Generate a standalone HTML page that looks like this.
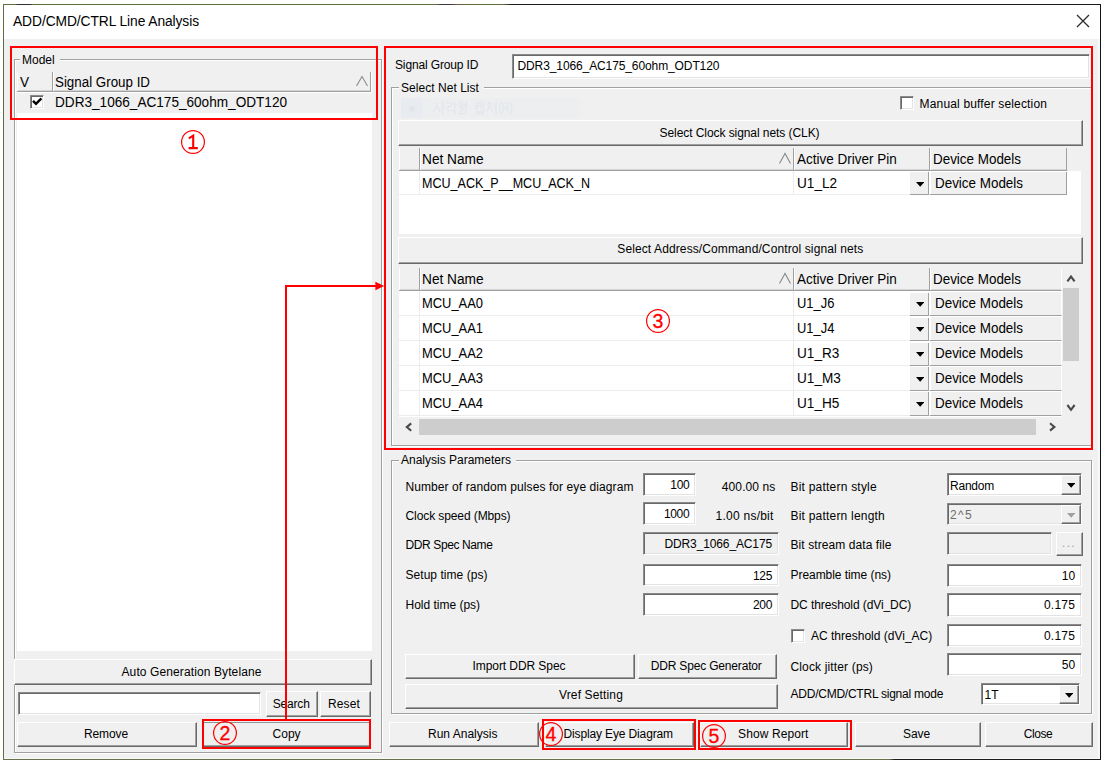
<!DOCTYPE html>
<html><head><meta charset="utf-8"><title>ADD/CMD/CTRL Line Analysis</title>
<style>
html,body{margin:0;padding:0;background:#fff;}
body{width:1104px;height:763px;position:relative;overflow:hidden;font-family:"Liberation Sans",sans-serif;font-size:12px;color:#000;}
.a{position:absolute;box-sizing:border-box;white-space:nowrap;}
.win{background:#f0f0f0;border:1px solid #55643a;border-right-color:#1c1c1c;border-bottom-color:#4a5535;}
.tb{background:#fff;}
.title{font-size:13.8px;color:#000;}
.btn{background:#f0f0f0;border:1px solid;border-color:#fff #696969 #696969 #fff;box-shadow:inset -1px -1px 0 #a0a0a0;text-align:center;}
.btn span{position:relative;display:inline-block;}
.sunk{background:#fff;border:1px solid;border-color:#8a8a8a #fff #fff #8a8a8a;box-shadow:inset 1px 1px 0 #696969, inset -1px -1px 0 #e3e3e3;}
.dis{background:#f0f0f0;}
.gb{border:1px solid #a0a0a0;box-shadow:1px 1px 0 #fff, inset 1px 1px 0 #fff;}
.gbl{background:#f0f0f0;padding:0 5px 0 2px;}
.lt{font-size:15.2px;transform:scaleX(0.895);transform-origin:0 50%;}
.red{border:2px solid #ff0000;}
.hdr{background:#f0f0f0;border-right:1px solid #a0a0a0;border-bottom:1px solid #a0a0a0;box-shadow:inset 1px 0 0 #fff, inset 0 -1px 0 #d4d4d4;}
.cb{background:#fff;border:1px solid;border-color:#8a8a8a #fff #fff #8a8a8a;box-shadow:inset 1px 1px 0 #696969, inset -1px -1px 0 #e3e3e3;}
</style></head><body>

<div class="a " style="left:3px;top:4px;width:1098px;height:756px;background:#f8f8f8;"></div>
<div class="a " style="left:4px;top:39px;width:1094px;height:718.5px;background:#f0f0f0;"></div>
<div class="a tb" style="left:4px;top:5px;width:1096px;height:34px;"></div>
<div class="a " style="left:3px;top:4px;width:1098px;height:1px;background:linear-gradient(to right,#5f6e40 0,#5f6e40 12px,#2f2f35 15px,#2f2f35 27px,#5f6e40 30px,#5f6e40 434px,#3a3a40 437px,#3a3a40 448px,#6b5a40 452px,#5f6e40 470px,#5f6e40 500px,#1c1c1c 508px,#1c1c1c 100%);"></div>
<div class="a " style="left:3px;top:4px;width:1px;height:756px;background:#5f6e40;"></div>
<div class="a " style="left:1100px;top:4px;width:1.2000000000000455px;height:756px;background:#141414;"></div>
<div class="a " style="left:3px;top:758.8px;width:1098.2px;height:1.2000000000000455px;background:linear-gradient(to right,#66734a 0,#66734a 886px,#1c1c1c 892px,#1c1c1c 100%);"></div>
<div class="a title" style="left:13px;top:13.0px;height:18px;line-height:18px;letter-spacing:-0.081px;">ADD/CMD/CTRL Line Analysis</div>
<svg class="a" style="left:1074px;top:12px" width="18" height="18" viewBox="0 0 18 18"><path d="M3 3 L15 15 M15 3 L3 15" stroke="#2b2b2b" stroke-width="1.3" fill="none"/></svg>
<div class="a gb" style="left:13.5px;top:59px;width:368.5px;height:694px;"></div>
<div class="a gbl" style="left:20px;top:53.0px;height:14px;line-height:14px;">Model</div>
<div class="a " style="left:17px;top:72px;width:355px;height:579px;background:#fff;"></div>
<div class="a hdr" style="left:17px;top:72px;width:36px;height:20px;"></div>
<div class="a hdr" style="left:53px;top:72px;width:318px;height:20px;"></div>
<div class="a lt" style="left:20px;top:72.5px;height:18px;line-height:18px;">V</div>
<div class="a lt" style="left:55.2px;top:72.5px;height:18px;line-height:18px;transform:scaleX(0.8791);">Signal Group ID</div>
<svg class="a" style="left:355px;top:75px" width="14" height="13" viewBox="0 0 14 13"><path d="M1.5 11 L7 1.5 L12.5 11" stroke="#8a8a8a" stroke-width="1.1" fill="none"/></svg>
<div class="a " style="left:17px;top:93px;width:355px;height:20px;background:#f0f0f0;"></div>
<div class="a cb" style="left:30px;top:95px;width:14px;height:14px;"></div>
<svg class="a" style="left:32px;top:97px" width="11" height="10" viewBox="0 0 11 10"><path d="M1 3.8 L4 6.8 L9.4 1.4" stroke="#000" stroke-width="2.4" fill="none"/></svg>
<div class="a lt" style="left:55.2px;top:93.0px;height:18px;line-height:18px;transform:scaleX(0.8951);">DDR3_1066_AC175_60ohm_ODT120</div>
<div class="a btn" style="left:14px;top:659px;width:358px;height:26px;line-height:24px;"><span style="left:-1.5px;top:0.2999999999999545px;letter-spacing:0.107px;">Auto Generation Bytelane</span></div>
<div class="a sunk" style="left:18px;top:692px;width:243px;height:23px;"></div>
<div class="a btn" style="left:266px;top:690.5px;width:52px;height:26.5px;line-height:24.5px;"><span style="left:-0.8000000000000114px;top:0.6499999999999773px;letter-spacing:-0.172px;">Search</span></div>
<div class="a btn" style="left:320px;top:690.5px;width:51px;height:26.5px;line-height:24.5px;"><span style="left:-1.5px;top:0.6499999999999773px;letter-spacing:0.128px;">Reset</span></div>
<div class="a btn" style="left:17px;top:722px;width:180px;height:25px;line-height:23px;"><span style="left:-1.0px;top:0px;letter-spacing:-0.115px;">Remove</span></div>
<div class="a btn" style="left:203px;top:722px;width:168px;height:25px;line-height:23px;border-top-color:#8d9692;"><span style="left:-0.39999999999997726px;top:0px;letter-spacing:-0.004px;">Copy</span></div>
<div class="a t" style="left:395px;top:56.5px;height:16px;line-height:16px;letter-spacing:-0.139px;">Signal Group ID</div>
<div class="a sunk" style="left:512px;top:54px;width:578px;height:25px;"></div>
<div class="a t" style="left:517.5px;top:58.0px;height:16px;line-height:16px;letter-spacing:-0.107px;">DDR3_1066_AC175_60ohm_ODT120</div>
<div class="a gb" style="left:391px;top:87px;width:701px;height:359px;"></div>
<div class="a gbl" style="left:399px;top:80.5px;height:14px;line-height:14px;letter-spacing:0.042px;">Select Net List</div>
<div class="a " style="left:401px;top:98px;width:179px;height:20px;background:#eceef0;"></div>
<div class="a " style="left:401px;top:98px;width:22px;height:20px;background:#e8ecf0;"></div>
<div class="a " style="left:409px;top:106px;width:6px;height:6px;background:#e2e6ea;border-radius:50%;"></div>
<svg class="a" style="left:433px;top:101px" width="82" height="16" viewBox="0 0 82 16" fill="none" stroke="#e3e6e9" stroke-width="1.2" stroke-linecap="round">
<path d="M4 1.5 L3.6 5 L0.6 10.5 M3.8 4.5 L7 10.5 M9.6 0.5 V13 M9.6 6 H11.6"/>
<path d="M13 2 H19 L18.6 4 L14 7.5 M21.6 0.5 V8 M21.6 4 H23.6 M15 9.6 H22 V13"/>
<path d="M27 0.8 H30 M25.4 2.8 H31.6 M33.6 0.5 V8 M31.6 3.6 H33.6 M31.6 5.8 H33.6"/><circle cx="28.5" cy="5.6" r="1.6"/><ellipse cx="30" cy="11" rx="3.2" ry="1.9"/>
<path d="M41.4 2 H46 L45.4 4.4 L42.4 7.5 M42.4 4.6 H45.6 M48 0.5 V8 M50.6 0.5 V8 M48 4 H50.6 M44 9 V12.8 H50.2 V9 M44 10.8 H50.2"/>
<path d="M56.5 0.6 V2 M53.6 2.8 H59.6 M56.6 3 L56 6 L53.4 10.5 M56.4 5.5 L59.6 10.5 M63 0.5 V13 M60.6 6 H63"/>
<path d="M68 1 Q65.4 7 68 13.4 M70 11.5 V2 H73 Q75.4 2 75.4 4.4 Q75.4 6.8 73 6.8 H70 M73 6.8 L75.8 11.5 M77.6 1 Q80.2 7 77.6 13.4"/>
</svg>
<div class="a cb" style="left:900px;top:96px;width:14px;height:14px;"></div>
<div class="a t" style="left:919.6px;top:96.0px;height:16px;line-height:16px;letter-spacing:0.158px;">Manual buffer selection</div>
<div class="a btn" style="left:398px;top:120px;width:685px;height:26px;line-height:24px;"><span style="left:-1.0px;top:-0.5px;letter-spacing:-0.069px;">Select Clock signal nets (CLK)</span></div>
<div class="a " style="left:399px;top:147.5px;width:682px;height:86.5px;background:#fff;"></div>
<div class="a " style="left:1067px;top:147.5px;width:14px;height:23.19999999999999px;background:#f0f0f0;"></div>
<div class="a hdr" style="left:399px;top:148px;width:20.5px;height:22.69999999999999px;"></div>
<div class="a hdr" style="left:419.5px;top:148px;width:374.5px;height:22.69999999999999px;"></div>
<div class="a hdr" style="left:794px;top:148px;width:136px;height:22.69999999999999px;"></div>
<div class="a hdr" style="left:930px;top:148px;width:137px;height:22.69999999999999px;"></div>
<div class="a lt" style="left:422px;top:149.7px;height:18px;line-height:18px;transform:scaleX(0.9009);">Net Name</div>
<div class="a lt" style="left:797px;top:149.7px;height:18px;line-height:18px;transform:scaleX(0.8882);">Active Driver Pin</div>
<div class="a lt" style="left:933px;top:149.7px;height:18px;line-height:18px;transform:scaleX(0.8835);">Device Models</div>
<svg class="a" style="left:778px;top:152px" width="14" height="13" viewBox="0 0 14 13"><path d="M1.5 11.5 L7 1.5 L12.5 11.5" stroke="#8a8a8a" stroke-width="1.1" fill="none"/></svg>
<div class="a " style="left:399px;top:194.4px;width:531px;height:1.0px;background:#ececec;"></div>
<div class="a " style="left:418.5px;top:170.7px;width:1.0px;height:24.700000000000017px;background:#ececec;"></div>
<div class="a " style="left:793px;top:170.7px;width:1px;height:24.700000000000017px;background:#ececec;"></div>
<div class="a lt" style="left:422px;top:173.89999999999998px;height:18px;line-height:18px;transform:scaleX(0.8259);">MCU_ACK_P__MCU_ACK_N</div>
<div class="a lt" style="left:797px;top:173.89999999999998px;height:18px;line-height:18px;">U1_L2</div>
<div class="a " style="left:910px;top:172.2px;width:19px;height:23.200000000000017px;background:#f0f0f0;border-right:1px solid #a0a0a0;border-bottom:1px solid #a0a0a0;"></div>
<svg class="a" style="left:916px;top:181.7px" width="8.4" height="5" viewBox="0 0 8.4 5"><path d="M0 0 L8.4 0 L4.2 4.7 Z" fill="#000"/></svg>
<div class="a " style="left:930px;top:171.7px;width:137px;height:23.700000000000017px;background:#f0f0f0;border-right:1px solid #a0a0a0;border-bottom:1px solid #a0a0a0;box-shadow:inset 1px 0 0 #fff;"></div>
<div class="a lt" style="left:935px;top:173.89999999999998px;height:18px;line-height:18px;transform:scaleX(0.8835);">Device Models</div>
<div class="a btn" style="left:398px;top:237px;width:685px;height:27px;line-height:25px;"><span style="left:-0.20000000000004547px;top:-0.6999999999999886px;letter-spacing:0.108px;">Select Address/Command/Control signal nets</span></div>
<div class="a " style="left:399px;top:268px;width:682px;height:168px;background:#fff;"></div>
<div class="a hdr" style="left:399px;top:268px;width:20.5px;height:23.100000000000023px;"></div>
<div class="a hdr" style="left:419.5px;top:268px;width:374.5px;height:23.100000000000023px;"></div>
<div class="a hdr" style="left:794px;top:268px;width:136px;height:23.100000000000023px;"></div>
<div class="a hdr" style="left:930px;top:268px;width:132px;height:23.100000000000023px;border-right-color:#fff;"></div>
<div class="a lt" style="left:422px;top:269.7px;height:18px;line-height:18px;transform:scaleX(0.9009);">Net Name</div>
<div class="a lt" style="left:797px;top:269.7px;height:18px;line-height:18px;transform:scaleX(0.8882);">Active Driver Pin</div>
<div class="a lt" style="left:933px;top:269.7px;height:18px;line-height:18px;transform:scaleX(0.8835);">Device Models</div>
<svg class="a" style="left:778px;top:272px" width="14" height="13" viewBox="0 0 14 13"><path d="M1.5 11.5 L7 1.5 L12.5 11.5" stroke="#8a8a8a" stroke-width="1.1" fill="none"/></svg>
<div class="a " style="left:399px;top:315.05px;width:531px;height:1.0px;background:#ececec;"></div>
<div class="a " style="left:418.5px;top:291.1px;width:1.0px;height:24.94999999999999px;background:#ececec;"></div>
<div class="a " style="left:793px;top:291.1px;width:1px;height:24.94999999999999px;background:#ececec;"></div>
<div class="a lt" style="left:422px;top:294.3px;height:18px;line-height:18px;transform:scaleX(0.8502);">MCU_AA0</div>
<div class="a lt" style="left:797px;top:294.3px;height:18px;line-height:18px;transform:scaleX(0.8518);">U1_J6</div>
<div class="a " style="left:910px;top:292.6px;width:19px;height:23.44999999999999px;background:#f0f0f0;border-right:1px solid #a0a0a0;border-bottom:1px solid #a0a0a0;"></div>
<svg class="a" style="left:916px;top:302.1px" width="8.4" height="5" viewBox="0 0 8.4 5"><path d="M0 0 L8.4 0 L4.2 4.7 Z" fill="#000"/></svg>
<div class="a " style="left:930px;top:292.1px;width:132px;height:23.94999999999999px;background:#f0f0f0;border-right:1px solid #fff;border-bottom:1px solid #a0a0a0;box-shadow:inset 1px 0 0 #fff;"></div>
<div class="a lt" style="left:935px;top:294.3px;height:18px;line-height:18px;transform:scaleX(0.8835);">Device Models</div>
<div class="a " style="left:399px;top:340.0px;width:531px;height:1.0px;background:#ececec;"></div>
<div class="a " style="left:418.5px;top:316.05px;width:1.0px;height:24.94999999999999px;background:#ececec;"></div>
<div class="a " style="left:793px;top:316.05px;width:1px;height:24.94999999999999px;background:#ececec;"></div>
<div class="a lt" style="left:422px;top:319.25px;height:18px;line-height:18px;transform:scaleX(0.8502);">MCU_AA1</div>
<div class="a lt" style="left:797px;top:319.25px;height:18px;line-height:18px;transform:scaleX(0.8518);">U1_J4</div>
<div class="a " style="left:910px;top:317.55px;width:19px;height:23.44999999999999px;background:#f0f0f0;border-right:1px solid #a0a0a0;border-bottom:1px solid #a0a0a0;"></div>
<svg class="a" style="left:916px;top:327.05px" width="8.4" height="5" viewBox="0 0 8.4 5"><path d="M0 0 L8.4 0 L4.2 4.7 Z" fill="#000"/></svg>
<div class="a " style="left:930px;top:317.05px;width:132px;height:23.94999999999999px;background:#f0f0f0;border-right:1px solid #fff;border-bottom:1px solid #a0a0a0;box-shadow:inset 1px 0 0 #fff;"></div>
<div class="a lt" style="left:935px;top:319.25px;height:18px;line-height:18px;transform:scaleX(0.8835);">Device Models</div>
<div class="a " style="left:399px;top:364.95px;width:531px;height:1.0px;background:#ececec;"></div>
<div class="a " style="left:418.5px;top:341.0px;width:1.0px;height:24.94999999999999px;background:#ececec;"></div>
<div class="a " style="left:793px;top:341.0px;width:1px;height:24.94999999999999px;background:#ececec;"></div>
<div class="a lt" style="left:422px;top:344.2px;height:18px;line-height:18px;transform:scaleX(0.8502);">MCU_AA2</div>
<div class="a lt" style="left:797px;top:344.2px;height:18px;line-height:18px;">U1_R3</div>
<div class="a " style="left:910px;top:342.5px;width:19px;height:23.44999999999999px;background:#f0f0f0;border-right:1px solid #a0a0a0;border-bottom:1px solid #a0a0a0;"></div>
<svg class="a" style="left:916px;top:352.0px" width="8.4" height="5" viewBox="0 0 8.4 5"><path d="M0 0 L8.4 0 L4.2 4.7 Z" fill="#000"/></svg>
<div class="a " style="left:930px;top:342.0px;width:132px;height:23.94999999999999px;background:#f0f0f0;border-right:1px solid #fff;border-bottom:1px solid #a0a0a0;box-shadow:inset 1px 0 0 #fff;"></div>
<div class="a lt" style="left:935px;top:344.2px;height:18px;line-height:18px;transform:scaleX(0.8835);">Device Models</div>
<div class="a " style="left:399px;top:389.9px;width:531px;height:1.0px;background:#ececec;"></div>
<div class="a " style="left:418.5px;top:365.95px;width:1.0px;height:24.94999999999999px;background:#ececec;"></div>
<div class="a " style="left:793px;top:365.95px;width:1px;height:24.94999999999999px;background:#ececec;"></div>
<div class="a lt" style="left:422px;top:369.15px;height:18px;line-height:18px;transform:scaleX(0.8502);">MCU_AA3</div>
<div class="a lt" style="left:797px;top:369.15px;height:18px;line-height:18px;">U1_M3</div>
<div class="a " style="left:910px;top:367.45px;width:19px;height:23.44999999999999px;background:#f0f0f0;border-right:1px solid #a0a0a0;border-bottom:1px solid #a0a0a0;"></div>
<svg class="a" style="left:916px;top:376.95px" width="8.4" height="5" viewBox="0 0 8.4 5"><path d="M0 0 L8.4 0 L4.2 4.7 Z" fill="#000"/></svg>
<div class="a " style="left:930px;top:366.95px;width:132px;height:23.94999999999999px;background:#f0f0f0;border-right:1px solid #fff;border-bottom:1px solid #a0a0a0;box-shadow:inset 1px 0 0 #fff;"></div>
<div class="a lt" style="left:935px;top:369.15px;height:18px;line-height:18px;transform:scaleX(0.8835);">Device Models</div>
<div class="a " style="left:399px;top:414.85px;width:531px;height:1.0px;background:#ececec;"></div>
<div class="a " style="left:418.5px;top:390.9px;width:1.0px;height:24.950000000000045px;background:#ececec;"></div>
<div class="a " style="left:793px;top:390.9px;width:1px;height:24.950000000000045px;background:#ececec;"></div>
<div class="a lt" style="left:422px;top:394.09999999999997px;height:18px;line-height:18px;transform:scaleX(0.8502);">MCU_AA4</div>
<div class="a lt" style="left:797px;top:394.09999999999997px;height:18px;line-height:18px;">U1_H5</div>
<div class="a " style="left:910px;top:392.4px;width:19px;height:23.450000000000045px;background:#f0f0f0;border-right:1px solid #a0a0a0;border-bottom:1px solid #a0a0a0;"></div>
<svg class="a" style="left:916px;top:401.9px" width="8.4" height="5" viewBox="0 0 8.4 5"><path d="M0 0 L8.4 0 L4.2 4.7 Z" fill="#000"/></svg>
<div class="a " style="left:930px;top:391.9px;width:132px;height:23.950000000000045px;background:#f0f0f0;border-right:1px solid #fff;border-bottom:1px solid #a0a0a0;box-shadow:inset 1px 0 0 #fff;"></div>
<div class="a lt" style="left:935px;top:394.09999999999997px;height:18px;line-height:18px;transform:scaleX(0.8835);">Device Models</div>
<div class="a " style="left:1062px;top:268px;width:19px;height:149px;background:#f0f0f0;"></div>
<div class="a " style="left:1063px;top:288px;width:16px;height:73px;background:#cdcdcd;"></div>
<div class="a " style="left:398px;top:417px;width:683px;height:19px;background:#f0f0f0;"></div>
<div class="a " style="left:419px;top:419px;width:617px;height:16px;background:#cdcdcd;"></div>
<svg class="a" style="left:0;top:0" width="1104" height="763" viewBox="0 0 1104 763" fill="none" stroke="#4a4a4a" stroke-width="2.1"><path d="M1067.4 281.4 L1071 276.6 L1074.6 281.4"/><path d="M1067.4 405 L1071 409.8 L1074.6 405"/><path d="M1050 423.2 L1054.4 426.9 L1050 430.6"/><path d="M411.2 423.4 L406.8 427.1 L411.2 430.8"/></svg>
<div class="a gb" style="left:391px;top:459.5px;width:701px;height:254.5px;"></div>
<div class="a gbl" style="left:399px;top:453.0px;height:14px;line-height:14px;letter-spacing:-0.002px;">Analysis Parameters</div>
<div class="a t" style="left:405.5px;top:479.0px;height:16px;line-height:16px;letter-spacing:0.083px;">Number of random pulses for eye diagram</div>
<div class="a t" style="left:405.5px;top:508.29999999999995px;height:16px;line-height:16px;letter-spacing:-0.095px;">Clock speed (Mbps)</div>
<div class="a t" style="left:405.5px;top:537.3px;height:16px;line-height:16px;letter-spacing:-0.387px;">DDR Spec Name</div>
<div class="a t" style="left:405.5px;top:567.2px;height:16px;line-height:16px;letter-spacing:0.042px;">Setup time (ps)</div>
<div class="a t" style="left:405.5px;top:596.5px;height:16px;line-height:16px;letter-spacing:-0.006px;">Hold time (ps)</div>
<div class="a sunk" style="left:643.3px;top:473px;width:52.700000000000045px;height:22.600000000000023px;"></div>
<div class="a t" style="right:414.70000000000005px;top:476.6px;height:16px;line-height:16px;text-align:right;letter-spacing:-0.344px;">100</div>
<div class="a sunk" style="left:643.3px;top:502.3px;width:52.700000000000045px;height:22.900000000000034px;"></div>
<div class="a t" style="right:414.70000000000005px;top:505.79999999999995px;height:16px;line-height:16px;text-align:right;letter-spacing:-0.326px;">1000</div>
<div class="a t" style="right:328.6px;top:479.0px;height:16px;line-height:16px;text-align:right;letter-spacing:0.098px;">400.00 ns</div>
<div class="a t" style="right:330.4px;top:508.29999999999995px;height:16px;line-height:16px;text-align:right;letter-spacing:0.239px;">1.00 ns/bit</div>
<div class="a sunk dis" style="left:643.3px;top:532px;width:135.70000000000005px;height:23px;"></div>
<div class="a t" style="right:332px;top:536.0px;height:16px;line-height:16px;text-align:right;letter-spacing:-0.127px;">DDR3_1066_AC175</div>
<div class="a sunk" style="left:643.3px;top:564px;width:135.70000000000005px;height:22.399999999999977px;"></div>
<div class="a t" style="right:332px;top:567.5px;height:16px;line-height:16px;text-align:right;letter-spacing:-0.344px;">125</div>
<div class="a sunk" style="left:643.3px;top:593.3px;width:135.70000000000005px;height:22.700000000000045px;"></div>
<div class="a t" style="right:332px;top:596.5px;height:16px;line-height:16px;text-align:right;letter-spacing:-0.344px;">200</div>
<div class="a t" style="left:790.5px;top:479.0px;height:16px;line-height:16px;letter-spacing:0.217px;">Bit pattern style</div>
<div class="a t" style="left:790.5px;top:508.29999999999995px;height:16px;line-height:16px;letter-spacing:0.209px;">Bit pattern length</div>
<div class="a t" style="left:790.5px;top:537.3px;height:16px;line-height:16px;letter-spacing:0.081px;">Bit stream data file</div>
<div class="a t" style="left:790.5px;top:567.2px;height:16px;line-height:16px;letter-spacing:-0.054px;">Preamble time (ns)</div>
<div class="a t" style="left:790.5px;top:596.5px;height:16px;line-height:16px;letter-spacing:-0.086px;">DC threshold (dVi_DC)</div>
<div class="a cb" style="left:791px;top:629px;width:14px;height:14px;"></div>
<div class="a t" style="left:811px;top:628.2px;height:16px;line-height:16px;letter-spacing:0.006px;">AC threshold (dVi_AC)</div>
<div class="a t" style="left:790.5px;top:658.5px;height:16px;line-height:16px;letter-spacing:0.146px;">Clock jitter (ps)</div>
<div class="a t" style="left:790.5px;top:686.2px;height:16px;line-height:16px;letter-spacing:-0.236px;">ADD/CMD/CTRL signal mode</div>
<div class="a sunk" style="left:946.5px;top:473px;width:135.5px;height:23px;"></div>
<div class="a t" style="left:950.0px;top:477.9px;height:16px;line-height:16px;letter-spacing:-0.227px;">Random</div>
<div class="a btn" style="left:1061px;top:475px;width:20px;height:20px;"></div>
<svg class="a" style="left:1067px;top:483.3px" width="8.4" height="5" viewBox="0 0 8.4 5"><path d="M0 0 L8.4 0 L4.2 4.7 Z" fill="#000"/></svg>
<div class="a sunk dis" style="left:946.5px;top:502.7px;width:135.5px;height:22.500000000000057px;"></div>
<div class="a t" style="left:950.0px;top:507.35px;height:16px;line-height:16px;letter-spacing:1.339px;color:#6d6d6d;">2^5</div>
<div class="a btn" style="left:1061px;top:504.7px;width:20px;height:19.500000000000057px;"></div>
<svg class="a" style="left:1067px;top:512.75px" width="8.4" height="5" viewBox="0 0 8.4 5"><path d="M0 0 L8.4 0 L4.2 4.7 Z" fill="#a0a0a0"/></svg>
<div class="a sunk dis" style="left:946.5px;top:532px;width:105.5px;height:23px;"></div>
<div class="a btn" style="left:1055.6px;top:532px;width:27.40000000000009px;height:23.5px;line-height:21.5px;"><span style="left:0px;top:0px;color:#a0a0a0;letter-spacing:1.2px;left:-0.4px;">...</span></div>
<div class="a sunk" style="left:946.5px;top:563.6px;width:135.5px;height:23.0px;"></div>
<div class="a t" style="right:28.799999999999955px;top:567.5px;height:16px;line-height:16px;text-align:right;">10</div>
<div class="a sunk" style="left:946.5px;top:593px;width:135.5px;height:23.600000000000023px;"></div>
<div class="a t" style="right:28.799999999999955px;top:596.5px;height:16px;line-height:16px;text-align:right;letter-spacing:0.254px;">0.175</div>
<div class="a sunk" style="left:946.5px;top:624px;width:135.5px;height:23px;"></div>
<div class="a t" style="right:28.799999999999955px;top:627.5px;height:16px;line-height:16px;text-align:right;letter-spacing:0.254px;">0.175</div>
<div class="a sunk" style="left:946.5px;top:653.3px;width:135.5px;height:23.0px;"></div>
<div class="a t" style="right:28.799999999999955px;top:656.5px;height:16px;line-height:16px;text-align:right;">50</div>
<div class="a sunk" style="left:981px;top:683px;width:99px;height:22px;"></div>
<div class="a t" style="left:984.5px;top:687.4px;height:16px;line-height:16px;">1T</div>
<div class="a btn" style="left:1059px;top:685px;width:20px;height:19px;"></div>
<svg class="a" style="left:1065px;top:692.8px" width="8.4" height="5" viewBox="0 0 8.4 5"><path d="M0 0 L8.4 0 L4.2 4.7 Z" fill="#000"/></svg>
<div class="a btn" style="left:405px;top:654px;width:230px;height:25px;line-height:23px;"><span style="left:-1.0px;top:-0.5px;letter-spacing:-0.082px;">Import DDR Spec</span></div>
<div class="a btn" style="left:638px;top:654px;width:139px;height:25px;line-height:23px;"><span style="left:-1.2999999999999545px;top:-0.5px;letter-spacing:-0.169px;">DDR Spec Generator</span></div>
<div class="a btn" style="left:405px;top:684px;width:373px;height:25px;line-height:23px;"><span style="left:-0.5px;top:-1.5px;letter-spacing:0.145px;">Vref Setting</span></div>
<div class="a btn" style="left:389px;top:722px;width:150px;height:25px;line-height:23px;"><span style="left:-1.3000000000000114px;top:-0.2999999999999545px;letter-spacing:0.002px;">Run Analysis</span></div>
<div class="a btn" style="left:545px;top:722px;width:149px;height:25px;line-height:23px;"><span style="left:-1.2999999999999545px;top:-0.2999999999999545px;letter-spacing:-0.134px;">Display Eye Diagram</span></div>
<div class="a btn" style="left:700px;top:722px;width:148px;height:25px;line-height:23px;"><span style="left:-0.7000000000000455px;top:-0.2999999999999545px;letter-spacing:0.102px;">Show Report</span></div>
<div class="a btn" style="left:855px;top:722px;width:126px;height:25px;line-height:23px;"><span style="left:-1.5px;top:-0.2999999999999545px;letter-spacing:-0.090px;">Save</span></div>
<div class="a btn" style="left:985px;top:722px;width:108px;height:25px;line-height:23px;"><span style="left:-1.0px;top:-0.2999999999999545px;letter-spacing:-0.417px;">Close</span></div>
<div class="a red" style="left:10px;top:46px;width:368px;height:74px;"></div>
<div class="a red" style="left:384px;top:46px;width:709px;height:404px;"></div>
<div class="a red" style="left:202px;top:719px;width:168.5px;height:30px;"></div>
<div class="a red" style="left:542px;top:719px;width:154px;height:31px;"></div>
<div class="a red" style="left:698px;top:720px;width:154px;height:30px;"></div>
<div class="a " style="left:285px;top:285px;width:2px;height:435px;background:#ff0000;"></div>
<div class="a " style="left:285px;top:285px;width:93px;height:2px;background:#ff0000;"></div>
<svg class="a" style="left:375px;top:281px" width="10" height="10" viewBox="0 0 10 10"><path d="M0.4 0.8 L9.2 5 L0.4 9.3 Z" fill="#ff0000"/></svg>
<svg class="a" style="left:179px;top:128px" width="28" height="28" viewBox="-14 -14 28 28"><circle cx="0" cy="0" r="11.4" stroke="#ff0000" stroke-width="1.2" fill="none"/>
<path d="M-4.2 -3.6 L0.2 -6.4 L0.2 6 M-4.4 6.1 L4.8 6.1" stroke="#ff0000" stroke-width="2.1" fill="none" stroke-linejoin="miter"/></svg>
<svg class="a" style="left:210.6px;top:719px" width="28" height="28" viewBox="-14 -14 28 28"><circle cx="0" cy="0" r="11.4" stroke="#ff0000" stroke-width="1.2" fill="none"/>
<text x="0" y="7" text-anchor="middle" font-family="Liberation Sans" font-size="19.5" fill="#ff0000" stroke="#ff0000" stroke-width="0.3">2</text></svg>
<svg class="a" style="left:644px;top:306.8px" width="28" height="28" viewBox="-14 -14 28 28"><circle cx="0" cy="0" r="11.4" stroke="#ff0000" stroke-width="1.2" fill="none"/>
<text x="0" y="7" text-anchor="middle" font-family="Liberation Sans" font-size="19.5" fill="#ff0000" stroke="#ff0000" stroke-width="0.3">3</text></svg>
<svg class="a" style="left:537.4px;top:720px" width="28" height="28" viewBox="-14 -14 28 28"><circle cx="0" cy="0" r="11.4" stroke="#ff0000" stroke-width="1.2" fill="none"/>
<text x="0" y="7" text-anchor="middle" font-family="Liberation Sans" font-size="19.5" fill="#ff0000" stroke="#ff0000" stroke-width="0.3">4</text></svg>
<svg class="a" style="left:699.5px;top:721.6px" width="28" height="28" viewBox="-14 -14 28 28"><circle cx="0" cy="0" r="11.4" stroke="#ff0000" stroke-width="1.2" fill="none"/>
<text x="0" y="7" text-anchor="middle" font-family="Liberation Sans" font-size="19.5" fill="#ff0000" stroke="#ff0000" stroke-width="0.3">5</text></svg>
</body></html>
